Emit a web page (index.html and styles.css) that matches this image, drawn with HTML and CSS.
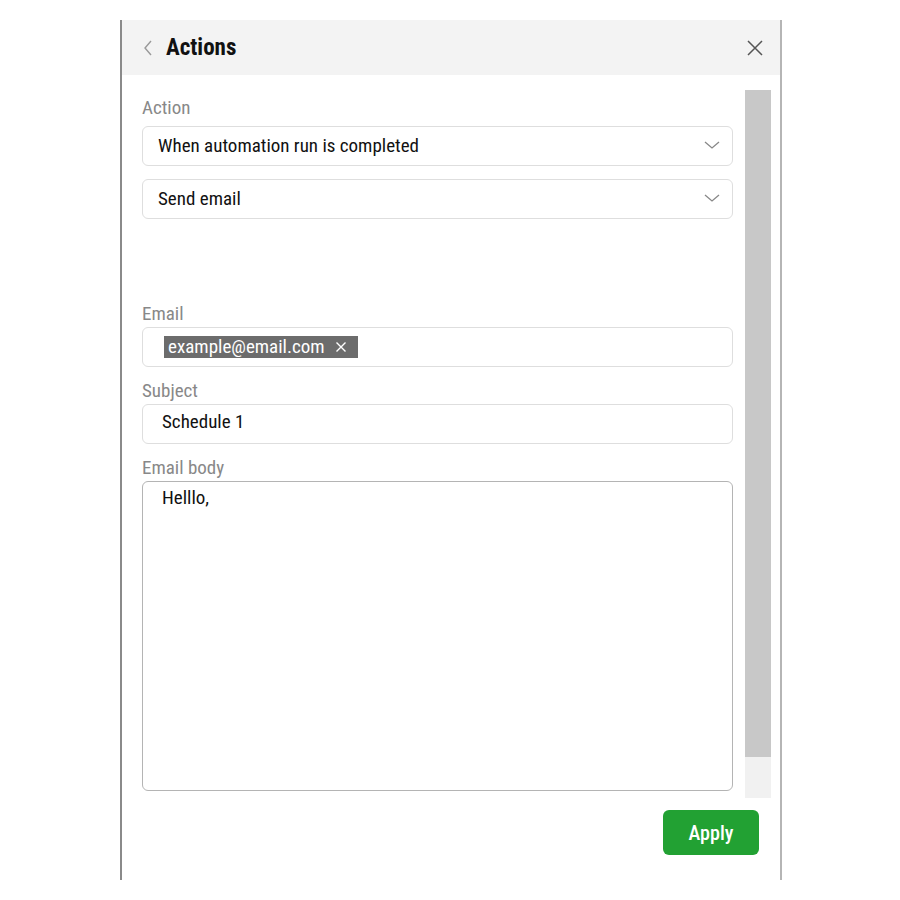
FILE: index.html
```html
<!DOCTYPE html>
<html>
<head>
<meta charset="utf-8">
<link rel="stylesheet" href="styles.css">
</head>
<body>
<div class="panel">
  <div class="header">
    <svg class="back" width="12" height="18" viewBox="0 0 12 18"><path d="M9 2 L3 9 L9 16" fill="none" stroke="#999" stroke-width="1.4"/></svg>
    <span class="title">Actions</span>
    <svg class="close" width="18" height="18" viewBox="0 0 18 18"><path d="M2 2 L16 16 M16 2 L2 16" fill="none" stroke="#555" stroke-width="1.5"/></svg>
  </div>
  <div class="body">
    <div class="content">
      <div class="label first">Action</div>
      <div class="select"><span>When automation run is completed</span><svg width="16" height="10" viewBox="0 0 16 10"><path d="M1 2 L8 8 L15 2" fill="none" stroke="#888" stroke-width="1.3"/></svg></div>
      <div class="select"><span>Send email</span><svg width="16" height="10" viewBox="0 0 16 10"><path d="M1 2 L8 8 L15 2" fill="none" stroke="#888" stroke-width="1.3"/></svg></div>
      <div class="spacer"></div>
      <div class="label">Email</div>
      <div class="input chips"><span class="chip">example@email.com <svg width="12" height="12" viewBox="0 0 12 12"><path d="M1.5 1.5 L10.5 10.5 M10.5 1.5 L1.5 10.5" stroke="#fff" stroke-width="1.4"/></svg></span></div>
      <div class="label">Subject</div>
      <div class="input text">Schedule 1</div>
      <div class="label">Email body</div>
      <div class="textarea">Helllo,</div>
    </div>
    <div class="scrollbar"><div class="thumb"></div></div>
  </div>
  <div class="footer"><button class="apply">Apply</button></div>
</div>
</body>
</html>
```
FILE: styles.css
```css
html, body { margin: 0; padding: 0; background: #fff; }
body { font-family: Roboto, "Noto Sans", sans-serif; font-stretch: condensed; }
.panel {
  margin: 20px 0 0 120px;
  width: 658px;
  height: 860px;
  border-left: 2px solid #8a8a8a;
  border-right: 2px solid #b5b5b5;
  display: flex;
  flex-direction: column;
}
.header {
  height: 55px;
  background: #f3f3f3;
  display: flex;
  align-items: center;
  padding: 0 16px 0 20px;
  flex: none;
}
.back { margin-right: 12px; }
.title { font-size: 23px; font-weight: 700; color: #111; flex: 1; }
.body {
  display: flex;
  align-items: flex-start;
  height: 723px;
  flex: none;
}
.content {
  width: 591px;
  margin-left: 20px;
  padding-top: 9px;
  display: flex;
  flex-direction: column;
}
.label { font-size: 19px; color: #888; height: 24px; line-height: 24px; margin-top: 12px; margin-bottom: 1px; }
.label.first { margin-bottom: 6px; }
.select, .input {
  height: 40px;
  box-sizing: border-box;
  border: 1px solid #dedede;
  border-radius: 6px;
  display: flex;
  align-items: center;
  font-size: 19px;
  color: #111;
}
.select { justify-content: space-between; padding: 0 12px 2px 15px; margin-bottom: 13px; }
.spacer { height: 58px; }
.chips { padding-left: 21px; }
.chip {
  background: #6c6c6c;
  color: #fff;
  height: 22px;
  line-height: 22px;
  padding: 0 11px 0 4px;
  display: inline-flex;
  align-items: center;
  gap: 10px;
}
.text { padding: 0 0 5px 19px; }
.textarea {
  height: 310px;
  box-sizing: border-box;
  border: 1px solid #b4b4b4;
  border-radius: 6px;
  padding: 4px 19px;
  font-size: 19px;
  color: #111;
}
.scrollbar {
  margin-left: 12px;
  margin-top: 15px;
  width: 26px;
  height: 708px;
  background: #f1f1f1;
}
.thumb { height: 667px; background: #c8c8c8; }
.footer { display: flex; justify-content: flex-end; padding: 12px 21px 0 0; }
.apply {
  width: 96px;
  height: 45px;
  background: #22a133;
  border: none;
  border-radius: 6px;
  color: #fff;
  font-family: Roboto, sans-serif;
  font-stretch: condensed;
  font-weight: 500;
  font-size: 20px;
}
```
